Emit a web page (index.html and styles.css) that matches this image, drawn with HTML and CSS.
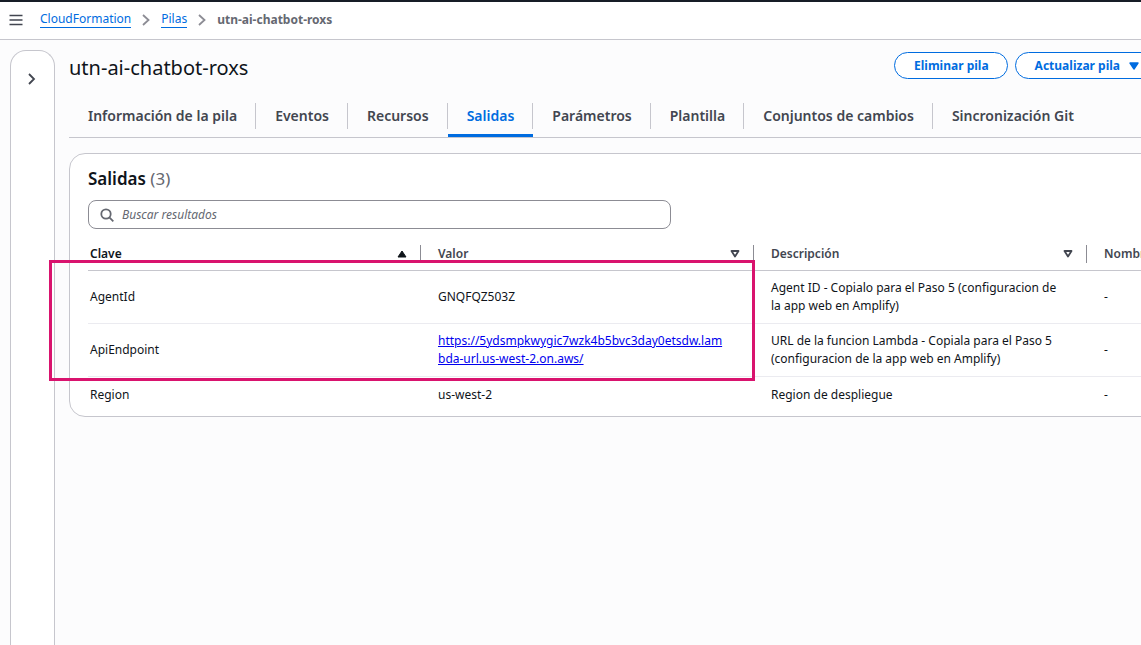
FILE: index.html
```html
<!DOCTYPE html>
<html lang="es">
<head>
    <meta charset="UTF-8">
    <meta name="viewport" content="width=device-width, initial-scale=1.0">
    <title>CloudFormation - utn-ai-chatbot-roxs</title>
    <link rel="stylesheet" href="styles.css">
</head>
<body>
    <header class="topbar">
        <button type="button" class="icon-btn" aria-label="Menú">
            <svg width="14" height="12" viewBox="0 0 14 12"><path d="M0.5 1.5h13M0.5 6h13M0.5 10.5h13" stroke="#424650" stroke-width="1.6"/></svg>
        </button>
        <nav class="breadcrumb" aria-label="Ruta">
            <a href="#">CloudFormation</a>
            <svg width="8" height="12" viewBox="0 0 8 12"><path d="M1 1l5.5 5L1 11" fill="none" stroke="#8c8c94" stroke-width="1.8"/></svg>
            <a href="#">Pilas</a>
            <svg width="8" height="12" viewBox="0 0 8 12"><path d="M1 1l5.5 5L1 11" fill="none" stroke="#8c8c94" stroke-width="1.8"/></svg>
            <span class="current">utn-ai-chatbot-roxs</span>
        </nav>
    </header>

    <div class="layout">
        <aside class="side-panel">
            <button type="button" class="icon-btn" aria-label="Abrir panel">
                <svg width="8" height="12" viewBox="0 0 8 12"><path d="M1 1l5 5L1 11" fill="none" stroke="#424650" stroke-width="1.8"/></svg>
            </button>
        </aside>

        <main class="content">
            <div class="stack-header">
                <h1>utn-ai-chatbot-roxs</h1>
                <div class="actions">
                    <button type="button" class="btn">Eliminar pila</button>
                    <button type="button" class="btn">Actualizar pila
                        <svg width="10" height="8" viewBox="0 0 10 8"><path d="M1 1h8L5 7z" fill="#006ce0" stroke="#006ce0" stroke-width="1.4" stroke-linejoin="round"/></svg>
                    </button>
                </div>
            </div>

            <div class="tabs" role="tablist">
                <button type="button" role="tab" class="tab"><span>Información de la pila</span></button>
                <button type="button" role="tab" class="tab"><span>Eventos</span></button>
                <button type="button" role="tab" class="tab"><span>Recursos</span></button>
                <button type="button" role="tab" class="tab active" aria-selected="true"><span>Salidas</span></button>
                <button type="button" role="tab" class="tab"><span>Parámetros</span></button>
                <button type="button" role="tab" class="tab"><span>Plantilla</span></button>
                <button type="button" role="tab" class="tab"><span>Conjuntos de cambios</span></button>
                <button type="button" role="tab" class="tab"><span>Sincronización Git</span></button>
            </div>

            <section class="card">
                <h2>Salidas <span class="count">(3)</span></h2>
                <label class="search">
                    <svg width="14" height="14" viewBox="0 0 14 14"><circle cx="6" cy="6" r="4.7" fill="none" stroke="#656871" stroke-width="1.8"/><path d="M9.3 9.3l4 4" stroke="#656871" stroke-width="1.8"/></svg>
                    <input type="search" placeholder="Buscar resultados" aria-label="Buscar resultados">
                </label>

                <div class="table-wrap">
                    <table>
                        <thead>
                            <tr>
                                <th class="sorted"><div class="th-inner">Clave
                                    <svg width="10" height="8" viewBox="0 0 10 8"><path d="M5 1l4 6H1z" fill="#0f141a" stroke="#0f141a" stroke-linejoin="round"/></svg></div></th>
                                <th><div class="th-inner">Valor
                                    <svg width="10" height="8" viewBox="0 0 10 8"><path d="M1.5 1h7L5 6.5z" fill="none" stroke="#424650" stroke-width="1.8" stroke-linejoin="round"/></svg></div></th>
                                <th><div class="th-inner">Descripción
                                    <svg width="10" height="8" viewBox="0 0 10 8"><path d="M1.5 1h7L5 6.5z" fill="none" stroke="#424650" stroke-width="1.8" stroke-linejoin="round"/></svg></div></th>
                                <th><div class="th-inner">Nombre</div></th>
                            </tr>
                        </thead>
                        <tbody>
                            <tr>
                                <td>AgentId</td>
                                <td>GNQFQZ503Z</td>
                                <td>Agent ID - Copialo para el Paso 5 (configuracion de la app web en Amplify)</td>
                                <td>-</td>
                            </tr>
                            <tr>
                                <td>ApiEndpoint</td>
                                <td><a href="#">https://5ydsmpkwygic7wzk4b5bvc3day0etsdw.lambda-url.us-west-2.on.aws/</a></td>
                                <td>URL de la funcion Lambda - Copiala para el Paso 5 (configuracion de la app web en Amplify)</td>
                                <td>-</td>
                            </tr>
                            <tr>
                                <td>Region</td>
                                <td>us-west-2</td>
                                <td>Region de despliegue</td>
                                <td>-</td>
                            </tr>
                        </tbody>
                    </table>
                    <div class="highlight"></div>
                </div>
            </section>
        </main>
    </div>
</body>
</html>
```

FILE: styles.css
```css
* { box-sizing: border-box; }
body {
    margin: 0;
    min-height: 100vh;
    display: flex;
    flex-direction: column;
    overflow: hidden;
    font-family: "Noto Sans", "Open Sans", sans-serif;
    font-size: 12px;
    line-height: 18px;
    color: #0f141a;
    background: #fcfcfd;
}
button, input { font: inherit; }
svg { flex: none; display: block; }
.icon-btn {
    display: flex;
    padding: 0;
    border: 0;
    background: none;
    cursor: pointer;
}
.topbar {
    display: flex;
    align-items: center;
    gap: 17px;
    height: 40px;
    padding: 0 9px 2px;
    background: #fff;
    border-top: 2px solid #161d26;
    border-bottom: 1px solid #c6c6cd;
}
.breadcrumb {
    display: flex;
    align-items: center;
    gap: 11px;
}
.breadcrumb a {
    color: #006ce0;
    text-decoration: none;
    border-bottom: 1px solid #006ce0;
    line-height: 16px;
}
.breadcrumb .current { color: #656871; font-weight: 700; }

.layout {
    flex: 1;
    display: flex;
    gap: 14px;
    padding: 10px 0 0 10px;
}
.side-panel {
    width: 45px;
    flex: none;
    padding: 22px 17px;
    background: #fff;
    border: 1px solid #c6c6cd;
    border-bottom: 0;
    border-radius: 16px 16px 0 0;
}
/* the panel runs on past the right edge of the window */
.content {
    flex: 1;
    min-width: 0;
    margin-right: -17px;
}
.stack-header {
    display: flex;
    align-items: flex-start;
    justify-content: space-between;
    padding-top: 2px;
}
h1 {
    margin: 0;
    font-size: 20px;
    line-height: 32px;
    font-weight: 400;
}
.actions { display: flex; gap: 7px; }
.btn {
    display: flex;
    align-items: center;
    gap: 9px;
    height: 27px;
    padding: 0 18px 0 19px;
    border: 1px solid #006ce0;
    border-radius: 14px;
    background: #fff;
    color: #006ce0;
    font-weight: 700;
    white-space: nowrap;
    cursor: pointer;
}

.tabs {
    display: flex;
    padding-top: 12px;
    border-bottom: 1px solid #c6c6cd;
}
.tab {
    padding: 7px 0 5px;
    border: 0;
    border-bottom: 3px solid transparent;
    background: none;
    color: #424650;
    font-size: 14px;
    font-weight: 600;
    white-space: nowrap;
    cursor: pointer;
}
.tab span {
    display: block;
    padding: 3px 18px 3px 19px;
    line-height: 20px;
    border-right: 1px solid #c6c6cd;
}
.tab:last-child span { border-right: 0; }
.tab.active { color: #006ce0; border-bottom-color: #006ce0; }

.card {
    margin-top: 15px;
    padding: 13px 0 4px 18px;
    background: #fff;
    border: 1px solid #c6c6cd;
    border-radius: 16px;
}
h2 {
    margin: 0;
    font-size: 17px;
    line-height: 24px;
    font-weight: 600;
}
.count { color: #656871; font-weight: 400; }
.search {
    display: flex;
    align-items: center;
    gap: 8px;
    width: 583px;
    height: 29px;
    margin-top: 9px;
    padding: 0 11px;
    border: 1px solid #8c8c94;
    border-radius: 8px;
}
.search input {
    flex: 1;
    padding: 0;
    border: 0;
    outline: 0;
    background: none;
}
.search input::placeholder { color: #656871; font-style: italic; opacity: 1; }

.table-wrap { position: relative; margin-top: 8px; }
table {
    width: 100%;
    table-layout: fixed;
    border-collapse: separate;
    border-spacing: 0;
}
th {
    width: 333px;
    padding: 8px 0 7px;
    border-bottom: 1px solid #c6c6cd;
    color: #424650;
    font-weight: 600;
    text-align: left;
}
th:last-child { width: auto; }
th.sorted { color: #0f141a; }
.th-inner {
    display: flex;
    align-items: center;
    justify-content: space-between;
    padding: 0 13px 0 17px;
    border-right: 1px solid #8c8c94;
}
th:last-child .th-inner { border-right: 0; }
th:first-child .th-inner { padding-left: 2px; }
td {
    padding: 8px 26px 8px 17px;
    border-bottom: 1px solid #ebebf0;
    overflow-wrap: anywhere;
}
td:first-child { padding-left: 2px; }
tr:last-child td { padding-top: 9px; border-bottom: 0; }
td a { color: #0000ee; }
/* marker frame over the first two rows */
.highlight {
    position: absolute;
    left: -39px;
    top: 23px;
    width: 706px;
    height: 121px;
    border: 3px solid #d9136e;
    pointer-events: none;
}
```
